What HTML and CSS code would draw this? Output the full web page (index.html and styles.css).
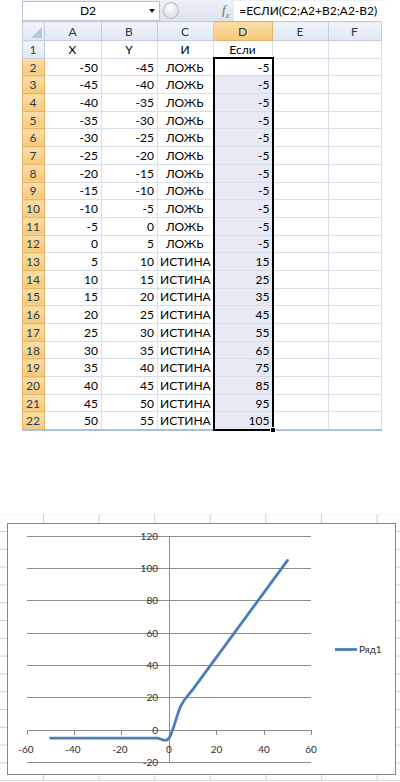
FILE: index.html
```html
<!DOCTYPE html>
<html lang="ru">
<head>
    <meta charset="UTF-8">
    <title>ЕСЛИ</title>
    <link rel="stylesheet" href="styles.css">
</head>
<body>
<!-- строка формул -->
<div class="formula-bar">
    <div class="name-box"><span>D2</span><i class="arrow"></i></div>
    <div class="round-btn"></div>
    <div class="fx">f<sub>x</sub></div>
    <div class="formula">=ЕСЛИ(С2;А2+В2;А2-В2)</div>
</div>
<!-- лист -->
<table class="sheet">
    <colgroup>
        <col style="width:22px"><col style="width:57px"><col style="width:56px"><col style="width:56px">
        <col style="width:59px"><col style="width:56px"><col style="width:53px">
    </colgroup>
    <tr class="heads"><th class="corner"></th><th>A</th><th>B</th><th>C</th><th class="on">D</th><th>E</th><th>F</th></tr>
    <tr><th>1</th><td class="c">X</td><td class="c">Y</td><td class="c">И</td><td class="c">Если</td><td></td><td></td></tr>
    <tr><th class="on">2</th><td>-50</td><td>-45</td><td class="c">ЛОЖЬ</td><td class="sel first">-5</td><td></td><td></td></tr>
    <tr><th class="on">3</th><td>-45</td><td>-40</td><td class="c">ЛОЖЬ</td><td class="sel">-5</td><td></td><td></td></tr>
    <tr><th class="on">4</th><td>-40</td><td>-35</td><td class="c">ЛОЖЬ</td><td class="sel">-5</td><td></td><td></td></tr>
    <tr><th class="on">5</th><td>-35</td><td>-30</td><td class="c">ЛОЖЬ</td><td class="sel">-5</td><td></td><td></td></tr>
    <tr><th class="on">6</th><td>-30</td><td>-25</td><td class="c">ЛОЖЬ</td><td class="sel">-5</td><td></td><td></td></tr>
    <tr><th class="on">7</th><td>-25</td><td>-20</td><td class="c">ЛОЖЬ</td><td class="sel">-5</td><td></td><td></td></tr>
    <tr><th class="on">8</th><td>-20</td><td>-15</td><td class="c">ЛОЖЬ</td><td class="sel">-5</td><td></td><td></td></tr>
    <tr><th class="on">9</th><td>-15</td><td>-10</td><td class="c">ЛОЖЬ</td><td class="sel">-5</td><td></td><td></td></tr>
    <tr><th class="on">10</th><td>-10</td><td>-5</td><td class="c">ЛОЖЬ</td><td class="sel">-5</td><td></td><td></td></tr>
    <tr><th class="on">11</th><td>-5</td><td>0</td><td class="c">ЛОЖЬ</td><td class="sel">-5</td><td></td><td></td></tr>
    <tr><th class="on">12</th><td>0</td><td>5</td><td class="c">ЛОЖЬ</td><td class="sel">-5</td><td></td><td></td></tr>
    <tr><th class="on">13</th><td>5</td><td>10</td><td class="c">ИСТИНА</td><td class="sel">15</td><td></td><td></td></tr>
    <tr><th class="on">14</th><td>10</td><td>15</td><td class="c">ИСТИНА</td><td class="sel">25</td><td></td><td></td></tr>
    <tr><th class="on">15</th><td>15</td><td>20</td><td class="c">ИСТИНА</td><td class="sel">35</td><td></td><td></td></tr>
    <tr><th class="on">16</th><td>20</td><td>25</td><td class="c">ИСТИНА</td><td class="sel">45</td><td></td><td></td></tr>
    <tr><th class="on">17</th><td>25</td><td>30</td><td class="c">ИСТИНА</td><td class="sel">55</td><td></td><td></td></tr>
    <tr><th class="on">18</th><td>30</td><td>35</td><td class="c">ИСТИНА</td><td class="sel">65</td><td></td><td></td></tr>
    <tr><th class="on">19</th><td>35</td><td>40</td><td class="c">ИСТИНА</td><td class="sel">75</td><td></td><td></td></tr>
    <tr><th class="on">20</th><td>40</td><td>45</td><td class="c">ИСТИНА</td><td class="sel">85</td><td></td><td></td></tr>
    <tr><th class="on">21</th><td>45</td><td>50</td><td class="c">ИСТИНА</td><td class="sel">95</td><td></td><td></td></tr>
    <tr><th class="on">22</th><td>50</td><td>55</td><td class="c">ИСТИНА</td><td class="sel last">105<i class="handle"></i></td><td></td><td></td></tr>
</table>
<!-- диаграмма -->
<div class="chart-wrap">
    <svg class="chart" width="389" height="252" viewBox="0 0 389 252">
        <rect x="0.5" y="0.5" width="388" height="251" fill="#fff" stroke="#868686"/>
        <g stroke="#8c8c8c" stroke-width="1">
            <line x1="20" y1="13.5" x2="304" y2="13.5"/>
            <line x1="20" y1="45.5" x2="304" y2="45.5"/>
            <line x1="20" y1="77.5" x2="304" y2="77.5"/>
            <line x1="20" y1="110.5" x2="304" y2="110.5"/>
            <line x1="20" y1="142.5" x2="304" y2="142.5"/>
            <line x1="20" y1="174.5" x2="304" y2="174.5"/>
            <line x1="20" y1="207.5" x2="304" y2="207.5"/>
            <line x1="20" y1="239.5" x2="304" y2="239.5"/>
            <line x1="162.5" y1="13" x2="162.5" y2="240"/>
            <line x1="20.5" y1="207" x2="20.5" y2="212"/>
            <line x1="67.5" y1="207" x2="67.5" y2="212"/>
            <line x1="114.5" y1="207" x2="114.5" y2="212"/>
            <line x1="209.5" y1="207" x2="209.5" y2="212"/>
            <line x1="257.5" y1="207" x2="257.5" y2="212"/>
            <line x1="304.5" y1="207" x2="304.5" y2="212"/>
        </g>
        <g class="lbl" text-anchor="end">
            <text x="151" y="17">120</text>
            <text x="151" y="49">100</text>
            <text x="151" y="81">80</text>
            <text x="151" y="114">60</text>
            <text x="151" y="146">40</text>
            <text x="151" y="178">20</text>
            <text x="151" y="211">0</text>
            <text x="151" y="243">-20</text>
        </g>
        <g class="lbl" text-anchor="middle">
            <text x="19" y="230">-60</text>
            <text x="66" y="230">-40</text>
            <text x="113" y="230">-20</text>
            <text x="162" y="230">0</text>
            <text x="209.5" y="230">20</text>
            <text x="257" y="230">40</text>
            <text x="304" y="230">60</text>
        </g>
        <path d="M43.5,215.08 L150.15,215.08 C154.1,215.08 158.05,220.46 162,215.08 C165.95,209.7 169.9,190.85 173.85,182.78 C177.8,174.7 181.75,172.01 185.7,166.63 L280.5,37.43"
              fill="none" stroke="#4a7ebb" stroke-width="2.8" stroke-linecap="round" stroke-linejoin="round"/>
        <line x1="328" y1="126.5" x2="350" y2="126.5" stroke="#4a7ebb" stroke-width="2.8"/>
        <text class="lbl" x="352" y="130">Ряд1</text>
    </svg>
</div>
</body>
</html>
```

FILE: styles.css
```css
*{
    margin: 0;
    padding: 0;
    box-sizing: border-box;
}
body{
    width: 400px;
    background: #fff;
    font-family: Lato, "Open Sans", sans-serif;
    color: #000;
}
/* строка формул */
.formula-bar{
    display: flex;
    align-items: center;
    width: 363px;
    height: 21px;
    margin-left: 22px;
    background: linear-gradient(#eef2f8, #d9e2ee);
}
.name-box{
    display: flex;
    align-items: center;
    width: 138px;
    height: 20px;
    background: #fff;
    border: 1px solid #b6c4d6;
}
.name-box span{
    flex: 1;
    text-align: center;
    font-size: 12px;
    padding-left: 4px;
}
.arrow{
    border-left: 3px solid transparent;
    border-right: 3px solid transparent;
    border-top: 4px solid #1c1c1c;
    margin-right: 4px;
}
.round-btn{
    width: 16px;
    height: 17px;
    margin-left: 3px;
    border-radius: 50%;
    border: 1px solid #b3bcc8;
    background: radial-gradient(circle at 40% 35%, #fff, #cdd4de);
}
.fx{
    margin-left: 43px;
    font: italic 13px "Liberation Serif", serif;
    color: #6d6d6d;
}
.fx sub{
    font-size: 8px;
}
.formula{
    flex: 1;
    height: 20px;
    margin-left: 5px;
    padding-left: 5px;
    background: #fff;
    font-size: 12px;
    line-height: 20px;
    white-space: nowrap;
}
/* лист */
.sheet{
    margin-left: 22px;
    width: 359px;
    table-layout: fixed;
    border-collapse: collapse;
    font-size: 12px;
    border-bottom: 2px solid #a9c1dd;
}
.sheet th,
.sheet td{
    height: 17.7px;
    padding: 0 3px 0 2px;
    border: 1px solid #d9dfe9;
    white-space: nowrap;
    font-weight: normal;
}
.sheet td{
    text-align: right;
}
.sheet td.c{
    text-align: center;
}
.sheet th{
    text-align: center;
    color: #2b3a4e;
    background: linear-gradient(#f1f5fa, #e1e8f2);
    border-color: #c2cedd;
}
.sheet .heads th{
    height: 19px;
}
.sheet th.on{
    background: linear-gradient(#fbdfa9, #f5c878);
    border-color: #e7b466;
}
.sheet th.corner{
    position: relative;
}
.sheet th.corner::after{
    content: "";
    position: absolute;
    right: 2px;
    bottom: 2px;
    border-left: 11px solid transparent;
    border-bottom: 11px solid #b7c6d9;
}
.sheet td.sel{
    position: relative;
    padding-right: 2px;
    background: #e7eaf5;
    border-left: 2px solid #000;
    border-right: 2px solid #000;
}
.sheet td.first{
    background: #fff;
    border-top: 2px solid #000;
}
.sheet td.last{
    border-bottom: 2px solid #000;
}
.handle{
    position: absolute;
    right: -4px;
    bottom: -4px;
    width: 6px;
    height: 6px;
    background: #000;
    border: 1px solid #fff;
}
/* диаграмма */
.chart-wrap{
    height: 267px;
    margin-top: 83px;
    padding: 9px 4px 6px 7px;
    background-image: linear-gradient(90deg, #cdd2da 1px, transparent 1px), linear-gradient(#cdd2da 1px, transparent 1px);
    background-size: 55.6px 100%, 100% 17.8px;
    background-position: 43px 0, 0 17px;
}
.chart{
    display: block;
}
.lbl{
    font-family: Lato, "Open Sans", sans-serif;
    font-size: 10px;
    fill: #2e2e2e;
}
```
